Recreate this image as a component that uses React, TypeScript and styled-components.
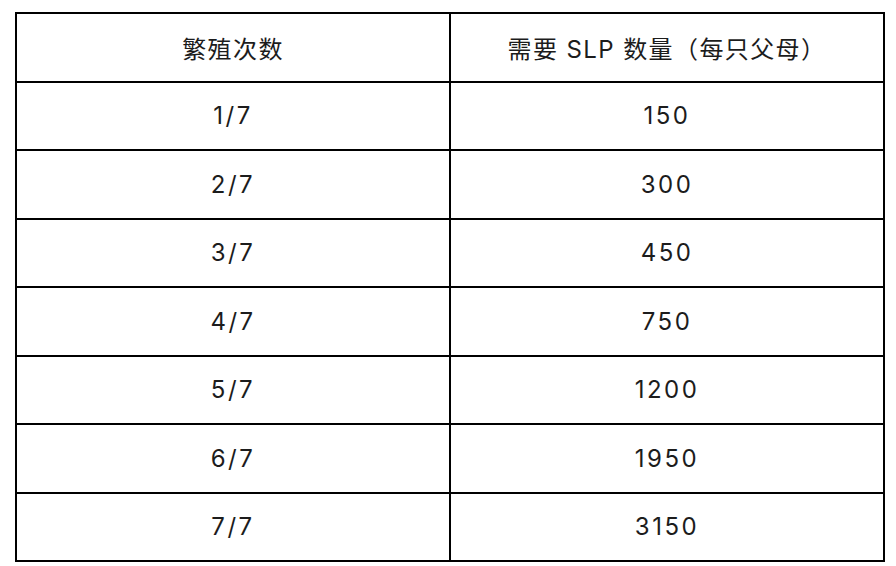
import styled, { createGlobalStyle } from 'styled-components';

const GlobalStyle = createGlobalStyle`
  html, body {
    margin: 0;
    padding: 0;
    background: #ffffff;
  }
  body {
    font-family: Inter, "Noto Sans CJK SC", sans-serif;
    color: #1c1c1c;
  }
`;

const Page = styled.div`
  padding: 12px 0 0 15px;
`;

const Table = styled.table`
  width: 870px;
  border-collapse: separate;
  border-spacing: 0;
  border-top: 2px solid #000;
  border-left: 2px solid #000;
  table-layout: fixed;
`;

const Cell = styled.td<{ $head?: boolean }>`
  height: 66.5px;
  padding: 0;
  border-right: 2px solid #000;
  border-bottom: 2px solid #000;
  text-align: center;
  vertical-align: middle;
  font-size: 24px;
  font-weight: 400;
  letter-spacing: ${props => (props.$head ? '1.4px' : '2.5px')};
  font-family: Inter, "Noto Sans CJK SC", sans-serif;
`;

const rows = [
  ['1/7', '150'],
  ['2/7', '300'],
  ['3/7', '450'],
  ['4/7', '750'],
  ['5/7', '1200'],
  ['6/7', '1950'],
  ['7/7', '3150'],
];

export default function App() {
  return (
    <Page>
      <GlobalStyle />
      <Table>
        <thead>
          <tr>
            <Cell as="th" $head>繁殖次数</Cell>
            <Cell as="th" $head>需要 SLP 数量（每只父母）</Cell>
          </tr>
        </thead>
        <tbody>
          {rows.map(([count, slp]) => (
            <tr key={count}>
              <Cell>{count}</Cell>
              <Cell>{slp}</Cell>
            </tr>
          ))}
        </tbody>
      </Table>
    </Page>
  );
}
